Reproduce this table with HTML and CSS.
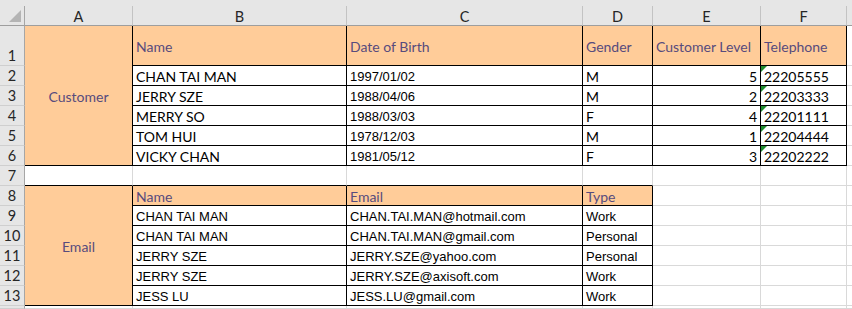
FILE: index.html
```html
<!DOCTYPE html>
<html>
<head>
<meta charset="utf-8">
<link rel="stylesheet" href="styles.css">
</head>
<body>
<div class="sheet">
  <div class="topbar"></div>

  <div class="corner"><span class="tri"></span></div>
  <div class="ch">A</div>
  <div class="ch">B</div>
  <div class="ch">C</div>
  <div class="ch">D</div>
  <div class="ch">E</div>
  <div class="ch">F</div>
  <div class="ch last"></div>

  <!-- row 1 -->
  <div class="rh">1</div>
  <div class="cell merged bk-r bk-b orange purple span6">Customer</div>
  <div class="cell orange purple bk-r bk-b">Name</div>
  <div class="cell orange purple bk-r bk-b">Date of Birth</div>
  <div class="cell orange purple bk-r bk-b">Gender</div>
  <div class="cell orange purple bk-r bk-b">Customer Level</div>
  <div class="cell orange purple bk-r bk-b">Telephone</div>
  <div class="cell"></div>

  <!-- row 2 -->
  <div class="rh">2</div>
  <div class="cell bk-r bk-b">CHAN TAI MAN</div>
  <div class="cell bk-r bk-b arial">1997/01/02</div>
  <div class="cell bk-r bk-b">M</div>
  <div class="cell bk-r bk-b num">5</div>
  <div class="cell bk-r bk-b flag">22205555</div>
  <div class="cell"></div>

  <!-- row 3 -->
  <div class="rh">3</div>
  <div class="cell bk-r bk-b">JERRY SZE</div>
  <div class="cell bk-r bk-b arial">1988/04/06</div>
  <div class="cell bk-r bk-b">M</div>
  <div class="cell bk-r bk-b num">2</div>
  <div class="cell bk-r bk-b flag">22203333</div>
  <div class="cell"></div>

  <!-- row 4 -->
  <div class="rh">4</div>
  <div class="cell bk-r bk-b">MERRY SO</div>
  <div class="cell bk-r bk-b arial">1988/03/03</div>
  <div class="cell bk-r bk-b">F</div>
  <div class="cell bk-r bk-b num">4</div>
  <div class="cell bk-r bk-b flag">22201111</div>
  <div class="cell"></div>

  <!-- row 5 -->
  <div class="rh">5</div>
  <div class="cell bk-r bk-b">TOM HUI</div>
  <div class="cell bk-r bk-b arial">1978/12/03</div>
  <div class="cell bk-r bk-b">M</div>
  <div class="cell bk-r bk-b num">1</div>
  <div class="cell bk-r bk-b flag">22204444</div>
  <div class="cell"></div>

  <!-- row 6 -->
  <div class="rh">6</div>
  <div class="cell bk-r bk-b">VICKY CHAN</div>
  <div class="cell bk-r bk-b arial">1981/05/12</div>
  <div class="cell bk-r bk-b">F</div>
  <div class="cell bk-r bk-b num">3</div>
  <div class="cell bk-r bk-b flag">22202222</div>
  <div class="cell"></div>

  <!-- row 7 -->
  <div class="rh">7</div>
  <div class="cell bk-b"></div>
  <div class="cell bk-b"></div>
  <div class="cell bk-b"></div>
  <div class="cell bk-b"></div>
  <div class="cell"></div>
  <div class="cell"></div>
  <div class="cell"></div>

  <!-- row 8 -->
  <div class="rh">8</div>
  <div class="cell merged bk-r bk-b orange purple span6">Email</div>
  <div class="cell orange purple bk-r bk-b">Name</div>
  <div class="cell orange purple bk-r bk-b">Email</div>
  <div class="cell orange purple bk-r bk-b">Type</div>
  <div class="cell"></div>
  <div class="cell"></div>
  <div class="cell"></div>

  <!-- row 9 -->
  <div class="rh">9</div>
  <div class="cell bk-r bk-b arial">CHAN TAI MAN</div>
  <div class="cell bk-r bk-b arial">CHAN.TAI.MAN@hotmail.com</div>
  <div class="cell bk-r bk-b arial">Work</div>
  <div class="cell"></div>
  <div class="cell"></div>
  <div class="cell"></div>

  <!-- row 10 -->
  <div class="rh">10</div>
  <div class="cell bk-r bk-b arial">CHAN TAI MAN</div>
  <div class="cell bk-r bk-b arial">CHAN.TAI.MAN@gmail.com</div>
  <div class="cell bk-r bk-b arial">Personal</div>
  <div class="cell"></div>
  <div class="cell"></div>
  <div class="cell"></div>

  <!-- row 11 -->
  <div class="rh">11</div>
  <div class="cell bk-r bk-b arial">JERRY SZE</div>
  <div class="cell bk-r bk-b arial">JERRY.SZE@yahoo.com</div>
  <div class="cell bk-r bk-b arial">Personal</div>
  <div class="cell"></div>
  <div class="cell"></div>
  <div class="cell"></div>

  <!-- row 12 -->
  <div class="rh">12</div>
  <div class="cell bk-r bk-b arial">JERRY SZE</div>
  <div class="cell bk-r bk-b arial">JERRY.SZE@axisoft.com</div>
  <div class="cell bk-r bk-b arial">Work</div>
  <div class="cell"></div>
  <div class="cell"></div>
  <div class="cell"></div>

  <!-- row 13 -->
  <div class="rh">13</div>
  <div class="cell bk-r bk-b arial">JESS LU</div>
  <div class="cell bk-r bk-b arial">JESS.LU@gmail.com</div>
  <div class="cell bk-r bk-b arial">Work</div>
  <div class="cell"></div>
  <div class="cell"></div>
  <div class="cell"></div>

  <!-- row 14 -->
  <div class="rh"></div>
  <div class="cell"></div>
  <div class="cell"></div>
  <div class="cell"></div>
  <div class="cell"></div>
  <div class="cell"></div>
  <div class="cell"></div>
  <div class="cell"></div>
</div>
</body>
</html>
```

FILE: styles.css
```css
* { box-sizing: border-box; }
html, body { margin: 0; padding: 0; background: #ffffff; }
body { width: 852px; height: 309px; overflow: hidden; }

.sheet {
  display: grid;
  grid-template-columns: 25px 108px 214px 236px 70px 108px 86px 5px;
  grid-template-rows: 6px 20px 40px repeat(12, 20px) 3px;
  font-family: Lato, "Open Sans", sans-serif;
  font-size: 14px;
  color: #000;
  width: 852px;
  height: 309px;
  overflow: hidden;
}

.topbar {
  grid-column: 1 / -1;
  background: #e6e6e6;
}

.corner {
  background: #e6e6e6;
  border-right: 1px solid #a6a6a6;
  border-bottom: 1px solid #9e9e9e;
  position: relative;
}
.tri {
  position: absolute;
  left: 9px;
  top: 4px;
  width: 0;
  height: 0;
  border-left: 12px solid transparent;
  border-bottom: 12px solid #b4b4b4;
}

.ch {
  background: #e6e6e6;
  border-right: 1px solid #c3c3c3;
  border-bottom: 1px solid #9e9e9e;
  display: flex;
  align-items: center;
  justify-content: center;
  color: #262626;
  font-size: 14.5px;
  padding-top: 1px;
}
.ch.last { border-right: none; }

.rh {
  background: #e6e6e6;
  border-right: 1px solid #a6a6a6;
  border-bottom: 1px solid #cfcfcf;
  display: flex;
  align-items: flex-end;
  justify-content: center;
  color: #262626;
  font-size: 14.5px;
  line-height: 19px;
}

.cell {
  border-right: 1px solid #d9d9d9;
  border-bottom: 1px solid #d9d9d9;
  display: flex;
  align-items: center;
  padding: 1px 3px 0 3px;
  white-space: nowrap;
  overflow: hidden;
  position: relative;
}

.bk-r { border-right-color: #000; }
.bk-b { border-bottom-color: #000; }

.orange { background: #ffcc99; }
.purple { color: #574b7d; }

.merged {
  justify-content: center;
  grid-row: span 6;
}

.arial {
  font-family: "Liberation Sans", Arial, sans-serif;
  font-size: 13px;
}

.num { justify-content: flex-end; }

.flag::before {
  content: "";
  position: absolute;
  left: 0;
  top: 0;
  width: 0;
  height: 0;
  border-top: 6px solid #1f8a2c;
  border-right: 6px solid transparent;
}
```
